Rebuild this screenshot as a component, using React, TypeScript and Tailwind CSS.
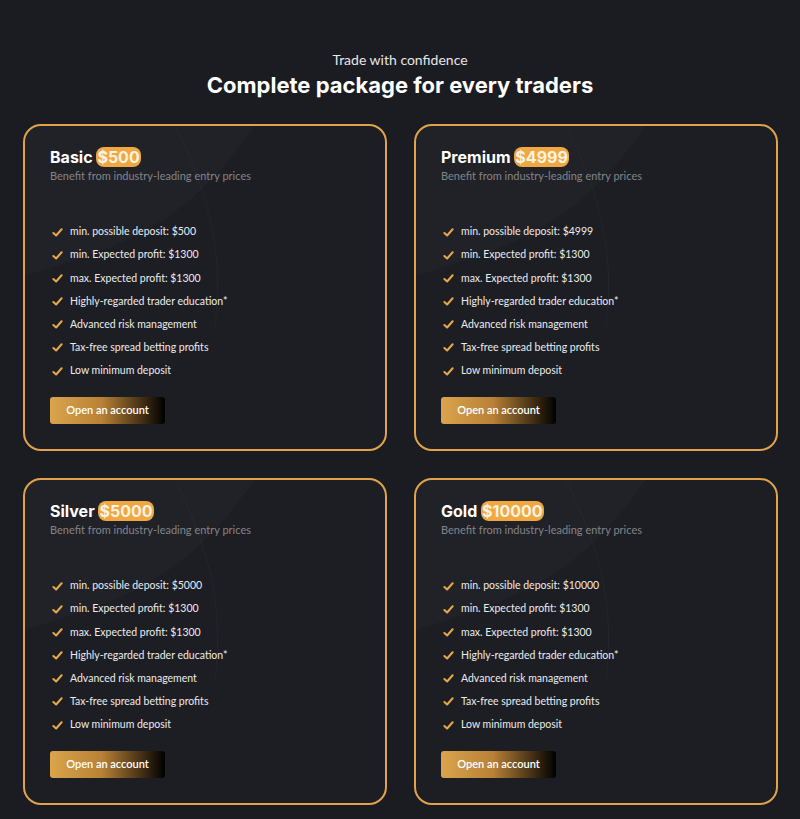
import React from 'react';

interface Plan {
  name: string;
  price: string;
}

const plans: Plan[] = [
  { name: 'Basic', price: '500' },
  { name: 'Premium', price: '4999' },
  { name: 'Silver', price: '5000' },
  { name: 'Gold', price: '10000' },
];

const heading = { fontFamily: 'Inter, "Noto Sans", sans-serif' };

function CheckMark() {
  return (
    <svg className="w-[11px] h-[11px] mr-[7px] ml-[2px] shrink-0" viewBox="0 0 12 12">
      <path d="M1.5 6.5 L4.5 9.3 L10.5 2.5" stroke="#e8a84a" strokeWidth="2.2" fill="none" strokeLinecap="round" strokeLinejoin="round" />
    </svg>
  );
}

function PlanCard({ plan }: { plan: Plan }) {
  const features = [
    `min. possible deposit: $${plan.price}`,
    'min. Expected profit: $1300',
    'max. Expected profit: $1300',
    'Highly-regarded trader education*',
    'Advanced risk management',
    'Tax-free spread betting profits',
    'Low minimum deposit',
  ];

  return (
    <div className="relative overflow-hidden h-[327px] rounded-[18px] border-2 border-[#e0a34c] bg-[#1d1e23] pl-[25px] pt-[21px]">
      {/* faint background swoosh */}
      <svg className="absolute left-0 top-0 pointer-events-none" width="364" height="200" viewBox="0 0 364 200">
        <path d="M0 0 H230 C200 40 170 80 110 110 C70 130 30 140 0 150 Z" fill="#ffffff" opacity="0.018" />
        <path d="M150 0 C180 60 200 120 190 200" stroke="#ffffff" strokeOpacity="0.03" fill="none" />
      </svg>
      <div className="relative">
        <h3 className="text-[16px] leading-[20px] font-bold text-white" style={heading}>
          {plan.name}{' '}
          <span className="bg-[#f0a843] rounded-[8px] px-[1px] text-[#fdf3e0]">${plan.price}</span>
        </h3>
        <p className="mt-[2px] text-[11px] leading-[14px] text-[#83848a]">
          Benefit from industry-leading entry prices
        </p>
        <ul className="mt-[42px] flex flex-col gap-[9.2px]">
          {features.map(f => (
            <li key={f} className="flex items-center h-[14px] text-[10.5px] text-[#ececee]">
              <CheckMark />
              <span>{f}</span>
            </li>
          ))}
        </ul>
        <button className="mt-[19px] w-[115px] h-[27px] rounded-[3px] bg-[linear-gradient(to_right,#dba44c_0%,#b88136_45%,#000000_100%)] text-[11px] text-white font-semibold">
          Open an account
        </button>
      </div>
    </div>
  );
}

export default function App() {
  return (
    <div className="min-h-[819px] bg-[#1b1c21] pt-[51px] pb-[14px] px-[23px]" style={{ fontFamily: 'Lato, "Noto Sans", sans-serif' }}>
      <div className="text-center">
        <p className="text-[14px] leading-[18px] text-[#e6e6e8]">Trade with confidence</p>
        <h2 className="mt-[2px] text-[22px] leading-[28px] font-bold text-white" style={heading}>
          Complete package for every traders
        </h2>
      </div>
      <div className="mt-[25px] grid grid-cols-2 gap-x-[27px] gap-y-[27px] w-[755px]">
        {plans.map(p => (
          <PlanCard key={p.name} plan={p} />
        ))}
      </div>
    </div>
  );
}
